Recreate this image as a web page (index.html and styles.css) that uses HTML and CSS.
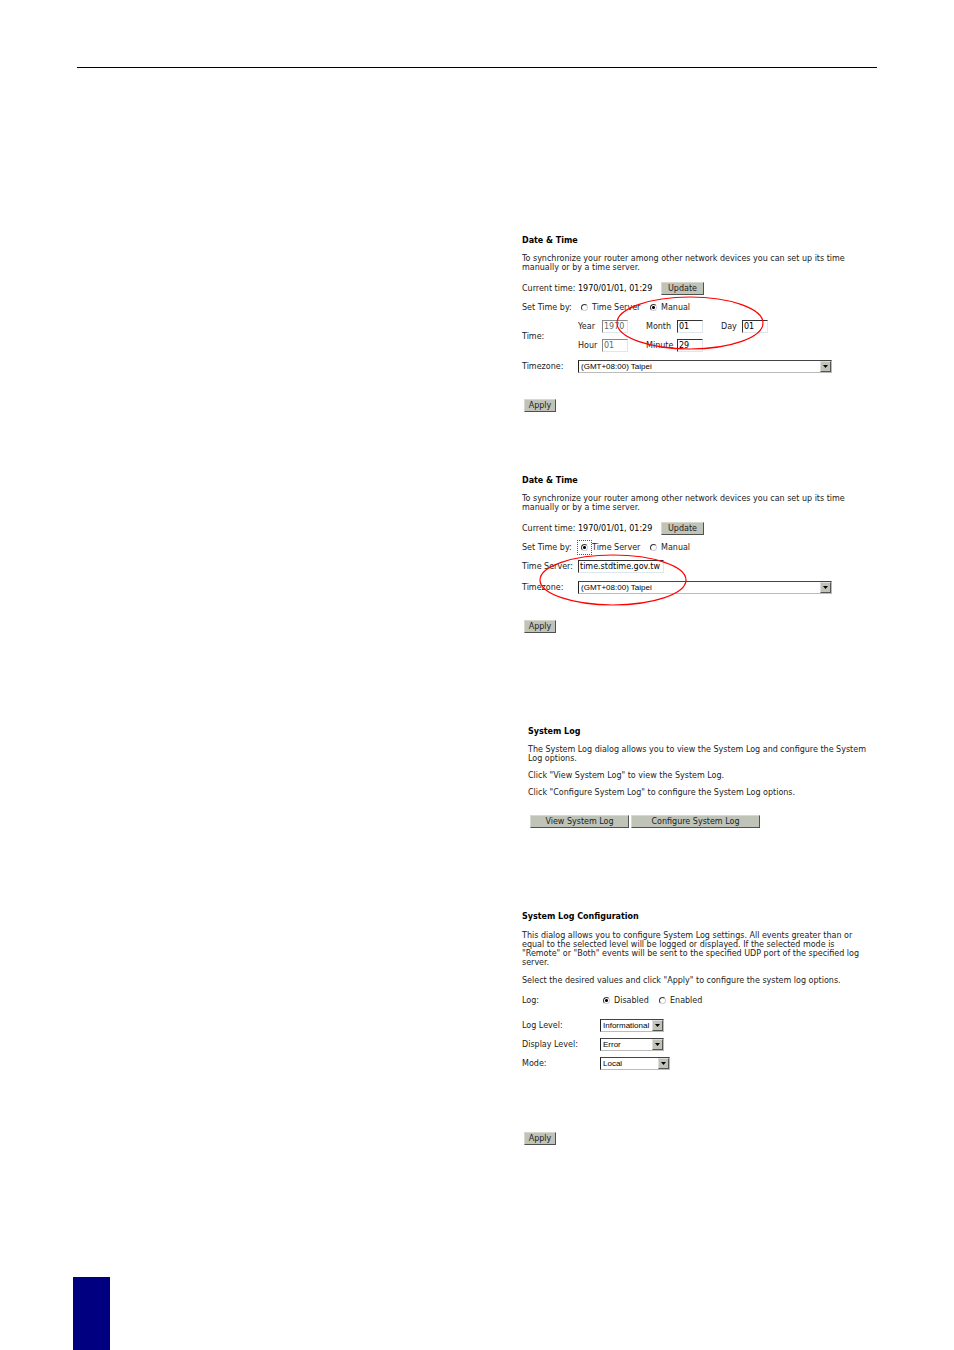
FILE: index.html
```html
<!DOCTYPE html>
<html lang="en">
  <head>
    <meta charset="UTF-8" />
    <meta name="viewport" content="width=device-width, initial-scale=1.0" />
    <title>Router Manual</title>
    <link rel="stylesheet" href="styles.css">
  </head>
  <body>
    <header class="page-header"></header>
    <main class="content">
      <section class="panel panel-manual">
        <h2>Date &amp; Time</h2>
        <p>To synchronize your router among other network devices you can set up its time manually or by a time server.</p>
        <form class="settings">
          <div class="row">
            <span class="name">Current time:</span>
            <span class="current">1970/01/01, 01:29</span>
            <button type="button">Update</button>
          </div>
          <div class="row">
            <span class="name">Set Time by:</span>
            <label class="option"><input type="radio" name="set-by" />Time Server</label>
            <label class="option"><input type="radio" name="set-by" checked />Manual</label>
          </div>
          <div class="row">
            <span class="name">Time:</span>
            <div class="time-grid">
              <label for="year">Year</label>
              <input class="dim" type="text" id="year" value="1970" />
              <label for="month">Month</label>
              <input type="text" id="month" value="01" />
              <label for="day">Day</label>
              <input type="text" id="day" value="01" />
              <label for="hour">Hour</label>
              <input class="dim" type="text" id="hour" value="01" />
              <label for="minute">Minute</label>
              <input type="text" id="minute" value="29" />
            </div>
          </div>
          <div class="row row-zone">
            <label class="name" for="zone-1">Timezone:</label>
            <div class="select zone">
              <select id="zone-1"><option>(GMT+08:00) Taipei</option></select>
              <span class="arrow"><svg viewBox="0 0 5 3"><path d="M0 0h5L2.5 3z" /></svg></span>
            </div>
          </div>
          <button type="button" class="apply">Apply</button>
        </form>
        <svg class="mark mark-manual" viewBox="0 0 148 54"><ellipse cx="74" cy="27" rx="73" ry="26" /></svg>
      </section>

      <section class="panel panel-server">
        <h2>Date &amp; Time</h2>
        <p>To synchronize your router among other network devices you can set up its time manually or by a time server.</p>
        <form class="settings">
          <div class="row">
            <span class="name">Current time:</span>
            <span class="current">1970/01/01, 01:29</span>
            <button type="button">Update</button>
          </div>
          <div class="row">
            <span class="name">Set Time by:</span>
            <label class="option"><span class="focus-box"><input type="radio" name="set-by" checked /></span>Time Server</label>
            <label class="option"><input type="radio" name="set-by" />Manual</label>
          </div>
          <div class="row">
            <label class="name" for="server">Time Server:</label>
            <input class="server" type="text" id="server" value="time.stdtime.gov.tw" />
          </div>
          <div class="row row-zone">
            <label class="name" for="zone-2">Timezone:</label>
            <div class="select zone">
              <select id="zone-2"><option>(GMT+08:00) Taipei</option></select>
              <span class="arrow"><svg viewBox="0 0 5 3"><path d="M0 0h5L2.5 3z" /></svg></span>
            </div>
          </div>
          <button type="button" class="apply">Apply</button>
        </form>
        <svg class="mark mark-server" viewBox="0 0 148 52"><ellipse cx="74" cy="26" rx="73" ry="25" /></svg>
      </section>

      <section class="panel panel-log">
        <h2>System Log</h2>
        <p>The System Log dialog allows you to view the System Log and configure the System Log options.</p>
        <p>Click "View System Log" to view the System Log.</p>
        <p>Click "Configure System Log" to configure the System Log options.</p>
        <div class="buttons">
          <button type="button" class="view">View System Log</button>
          <button type="button" class="configure">Configure System Log</button>
        </div>
      </section>

      <section class="panel panel-config">
        <h2>System Log Configuration</h2>
        <p>This dialog allows you to configure System Log settings. All events greater than or equal to the selected level will be logged or displayed. If the selected mode is "Remote" or "Both" events will be sent to the specified UDP port of the specified log server.</p>
        <p>Select the desired values and click "Apply" to configure the system log options.</p>
        <form class="settings">
          <div class="row row-log">
            <span class="name">Log:</span>
            <label class="option"><input type="radio" name="log" checked />Disabled</label>
            <label class="option"><input type="radio" name="log" />Enabled</label>
          </div>
          <div class="row">
            <label class="name" for="level">Log Level:</label>
            <div class="select level">
              <select id="level"><option>Informational</option></select>
              <span class="arrow"><svg viewBox="0 0 5 3"><path d="M0 0h5L2.5 3z" /></svg></span>
            </div>
          </div>
          <div class="row">
            <label class="name" for="display">Display Level:</label>
            <div class="select level">
              <select id="display"><option>Error</option></select>
              <span class="arrow"><svg viewBox="0 0 5 3"><path d="M0 0h5L2.5 3z" /></svg></span>
            </div>
          </div>
          <div class="row">
            <label class="name" for="mode">Mode:</label>
            <div class="select mode">
              <select id="mode"><option>Local</option></select>
              <span class="arrow"><svg viewBox="0 0 5 3"><path d="M0 0h5L2.5 3z" /></svg></span>
            </div>
          </div>
          <button type="button" class="apply">Apply</button>
        </form>
      </section>
    </main>
    <footer class="page-footer"><div class="tab"></div></footer>
  </body>
</html>
```
FILE: styles.css
```css
* {
  margin: 0;
  padding: 0;
  box-sizing: border-box;
}

body {
  min-height: 100vh;
  display: flex;
  flex-direction: column;
  background-color: white;
  color: #222;
  font-family: "DejaVu Sans", Verdana, sans-serif;
  font-size: 8px;
  line-height: 9px;
}
.page-header {
  margin: 0 77px;
  padding-top: 67px;
  border-bottom: 1px solid black;
}
.content {
  padding: 168px 77px 0;
  display: grid;
  grid-template-columns: minmax(0, 445px) minmax(350px, 1fr);
}
.panel {
  grid-column: 2;
  position: relative;
}
.panel-manual,
.panel-server,
.panel-config {
  max-width: 350px;
}
.panel-server {
  margin-top: 64px;
}
.panel-log {
  margin-top: 94px;
  padding-left: 6px;
}
.panel-config {
  margin-top: 84px;
}
h2 {
  color: black;
  font-size: 8px;
  line-height: 9px;
}
p {
  margin-top: 9px;
}
.panel-manual p,
.panel-server p {
  max-width: 330px;
}
.panel-log p + p {
  margin-top: 8px;
}
.panel-config h2 + p {
  margin-top: 10px;
}

/* Form rows */
.settings {
  padding-top: 7px;
}
.row {
  display: flex;
  align-items: center;
  min-height: 19px;
}
.row-zone {
  min-height: 22px;
}
.name {
  width: 56px;
  flex-shrink: 0;
  white-space: nowrap;
}
.current {
  width: 83px;
  color: black;
  white-space: nowrap;
}
.option {
  display: flex;
  align-items: center;
  width: 69px;
  padding-left: 3px;
  gap: 4px;
  white-space: nowrap;
}
.time-grid {
  display: grid;
  grid-template-columns: 24px 44px 31px 44px 21px 26px;
  grid-auto-rows: 19px;
  align-items: center;
}

/* Controls */
button {
  height: 13px;
  min-width: 43px;
  background-color: #c0c4b8;
  border: 1px solid;
  border-color: #d8d8d0 #505050 #505050 #d8d8d0;
  color: #222;
  font: inherit;
}
.apply {
  display: block;
  min-width: 32px;
  margin: 22px 0 0 2px;
}
input[type="text"] {
  width: 26px;
  height: 13px;
  padding-left: 1px;
  border: 1px solid;
  border-color: #333 #dde8ee #dde8ee #333;
  background-color: white;
  color: black;
  font: inherit;
}
input[type="text"].dim {
  border-color: #888 #dde8ee #dde8ee #888;
  color: #666;
}
input[type="text"].server {
  width: 86px;
}
input[type="radio"] {
  display: block;
  appearance: none;
  width: 7px;
  height: 7px;
  flex-shrink: 0;
  border: 1px solid;
  border-color: #333 #ccd #ccd #333;
  border-radius: 50%;
}
input[type="radio"]:checked {
  background: radial-gradient(circle, black 1px, white 2px);
}
.focus-box {
  outline: 1px dotted #555;
  outline-offset: 3px;
}
.select {
  position: relative;
  height: 13px;
}
.select select {
  display: block;
  appearance: none;
  width: 100%;
  height: 100%;
  padding: 0 13px 0 2px;
  border: 1px solid;
  border-color: #444 #bbb #bbb #222;
  border-radius: 0;
  background-color: white;
  color: black;
  font-family: "Liberation Sans", Arial, sans-serif;
  font-size: 8px;
}
.arrow {
  position: absolute;
  top: 1px;
  right: 1px;
  bottom: 1px;
  width: 11px;
  display: flex;
  align-items: center;
  justify-content: center;
  border: 1px solid;
  border-color: #ddd #555 #555 #ddd;
  background-color: #c0c4b8;
  pointer-events: none;
}
.arrow svg {
  width: 5px;
  height: 3px;
}
.zone {
  width: 254px;
}
.level {
  width: 64px;
}
.mode {
  width: 70px;
}

/* Red rings over the fields */
.mark {
  position: absolute;
  pointer-events: none;
}
.mark ellipse {
  fill: none;
  stroke: red;
  stroke-width: 1.2;
}
.mark-manual {
  left: 94px;
  top: 60px;
  width: 148px;
  height: 54px;
}
.mark-server {
  left: 17px;
  top: 78px;
  width: 148px;
  height: 52px;
}

.buttons {
  display: flex;
  gap: 2px;
  padding: 18px 0 0 2px;
}
.view {
  width: 99px;
}
.configure {
  width: 129px;
}
.panel-config .settings {
  padding-top: 6px;
}
.panel-config .name {
  width: 78px;
}
.panel-config .option {
  width: 56px;
}
.row-log {
  margin-bottom: 6px;
}
.panel-config .apply {
  margin-top: 59px;
}

.page-footer {
  margin-top: auto;
  padding-left: 73px;
}
.tab {
  width: 37px;
  height: 73px;
  background-color: #000080;
}
```
